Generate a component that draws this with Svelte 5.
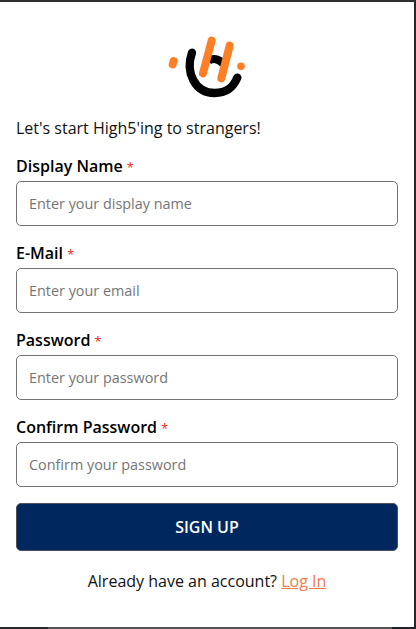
<script>
  const fields = [
    { id: 'name', label: 'Display Name', type: 'text', placeholder: 'Enter your display name' },
    { id: 'email', label: 'E-Mail', type: 'email', placeholder: 'Enter your email' },
    { id: 'password', label: 'Password', type: 'password', placeholder: 'Enter your password' },
    { id: 'confirm', label: 'Confirm Password', type: 'password', placeholder: 'Confirm your password' }
  ];
</script>

<main class="frame">
  <div class="panel">
    <svg class="logo" viewBox="0 0 285 240" fill="none" stroke-linecap="round" aria-label="High5">
      <path d="M96 83C75 142 105 204 164 204C199 204 219 189 232 158" stroke="#000" stroke-width="25" />
      <path d="M146 107C159 98 176 101 190 116" stroke="#000" stroke-width="24" stroke-linecap="butt" />
      <g stroke="#ff7f27">
        <path d="M155 47L129 145M209 62L184 160" stroke-width="24" />
        <path d="M41 108L38 118" stroke-width="24" />
      </g>
      <circle cx="243" cy="124" r="11.5" fill="#ff7f27" />
    </svg>
    <p class="intro">Let's start High5'ing to strangers!</p>
    <form>
      {#each fields as field}
        <div class="field">
          <label for={field.id}>{field.label} <span>*</span></label>
          <input id={field.id} type={field.type} placeholder={field.placeholder} />
        </div>
      {/each}
      <button type="button">SIGN UP</button>
    </form>
    <p class="login">Already have an account? <a href="#login">Log In</a></p>
  </div>
  <div class="edge"></div>
</main>

<style>
  :global(body) { background: #fff; }
  .frame {
    box-sizing: border-box;
    height: 629px;
    display: flex;
    flex-direction: column;
    border-top: 2px solid #302e30;
    border-right: 2px solid #24262b;
    font-family: "Open Sans", sans-serif;
    font-size: 16px;
    line-height: 22px;
    color: #111;
    overflow: hidden;
  }
  .panel {
    flex: 1;
    display: flex;
    flex-direction: column;
    padding: 23px 16px 0;
  }
  .logo { width: 95px; height: 80px; align-self: center; flex: none; }
  p { margin: 0; }
  .intro { margin-top: 12px; }
  form { display: flex; flex-direction: column; gap: 16px; margin-top: 16px; }
  .field { display: flex; flex-direction: column; gap: 4px; }
  label { font-weight: 600; color: #000; }
  label span { color: #ed1c24; font-size: 12.8px; font-weight: 400; line-height: 1; }
  input {
    box-sizing: border-box;
    width: 100%;
    height: 45px;
    padding: 0 12px;
    border: 1px solid #737373;
    border-radius: 5px;
    background: #fff;
    font: 14.4px "Open Sans", sans-serif;
  }
  input::placeholder { color: #757575; opacity: 1; }
  button {
    height: 48px;
    padding: 0;
    border: 1px solid #4b5059;
    border-radius: 5px;
    background: #00285f;
    color: #fff;
    font: 600 16px "Open Sans", sans-serif;
  }
  .login { margin-top: 19px; text-align: center; }
  a { color: #f17b4d; }
  .edge {
    height: 2px;
    background: linear-gradient(90deg, #292b31 48px, #555557 48px 392px, #20222b 392px);
  }
</style>
